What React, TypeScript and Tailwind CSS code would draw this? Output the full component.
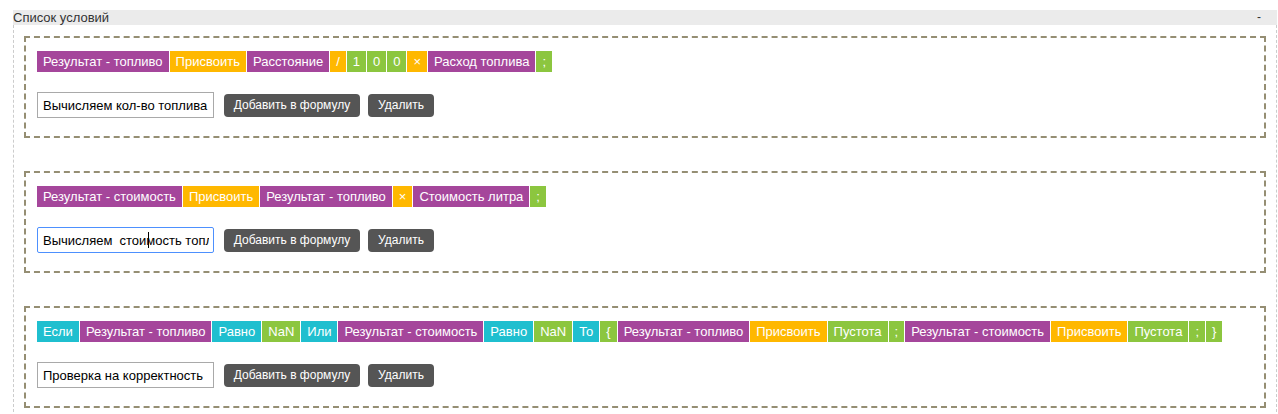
import React from "react";

type Kind = "var" | "op" | "num" | "cond";

interface Token {
  text: string;
  kind: Kind;
}

const kindClass: Record<Kind, string> = {
  var: "bg-[#a5469b]",
  op: "bg-[#ffb800]",
  num: "bg-[#8cc63f]",
  cond: "bg-[#1fbfcf]",
};

interface Formula {
  id: number;
  title: string;
  focused?: boolean;
  tokens: Token[];
}

const formulas: Formula[] = [
  {
    id: 1,
    title: "Вычисляем кол-во топлива",
    tokens: [
      { text: "Результат - топливо", kind: "var" },
      { text: "Присвоить", kind: "op" },
      { text: "Расстояние", kind: "var" },
      { text: "/", kind: "op" },
      { text: "1", kind: "num" },
      { text: "0", kind: "num" },
      { text: "0", kind: "num" },
      { text: "×", kind: "op" },
      { text: "Расход топлива", kind: "var" },
      { text: ";", kind: "num" },
    ],
  },
  {
    id: 2,
    title: "Вычисляем  стоимость топлива",
    focused: true,
    tokens: [
      { text: "Результат - стоимость", kind: "var" },
      { text: "Присвоить", kind: "op" },
      { text: "Результат - топливо", kind: "var" },
      { text: "×", kind: "op" },
      { text: "Стоимость литра", kind: "var" },
      { text: ";", kind: "num" },
    ],
  },
  {
    id: 3,
    title: "Проверка на корректность",
    tokens: [
      { text: "Если", kind: "cond" },
      { text: "Результат - топливо", kind: "var" },
      { text: "Равно", kind: "cond" },
      { text: "NaN", kind: "num" },
      { text: "Или", kind: "cond" },
      { text: "Результат - стоимость", kind: "var" },
      { text: "Равно", kind: "cond" },
      { text: "NaN", kind: "num" },
      { text: "То", kind: "cond" },
      { text: "{", kind: "num" },
      { text: "Результат - топливо", kind: "var" },
      { text: "Присвоить", kind: "op" },
      { text: "Пустота", kind: "num" },
      { text: ";", kind: "num" },
      { text: "Результат - стоимость", kind: "var" },
      { text: "Присвоить", kind: "op" },
      { text: "Пустота", kind: "num" },
      { text: ";", kind: "num" },
      { text: "}", kind: "num" },
    ],
  },
];

function FormulaCard({ formula }: { formula: Formula }) {
  return (
    <div className="border-2 border-dashed border-[#958e73] pl-[11px] pr-[11px] pt-[13px] pb-[18px]">
      {/* tokens */}
      <div className="flex flex-wrap gap-[1px]">
        {formula.tokens.map((t, i) => (
          <span
            key={i}
            className={`h-[21px] leading-[21px] px-[6px] text-[13px] text-white whitespace-nowrap ${kindClass[t.kind]}`}
          >
            {t.text}
          </span>
        ))}
      </div>

      {/* title + actions */}
      <div className="flex items-center mt-[20px]">
        <div className="relative">
          <input
            type="text"
            defaultValue={formula.title}
            className={
              formula.focused
                ? "block w-[177px] h-[26px] pl-[5px] pr-[4px] text-[13px] text-black bg-white border border-[#4d90fe] rounded-[2px] outline-none"
                : "block w-[177px] h-[26px] pl-[5px] pr-[4px] text-[13px] text-black bg-white border border-[#a9a9a9] outline-none"
            }
          />
          {formula.focused && (
            <span className="absolute left-[111px] top-[5px] w-[1px] h-[16px] bg-black" />
          )}
        </div>
        <button className="ml-[10px] w-[136px] h-[23px] rounded-[4px] bg-[#555555] text-white text-[12px]">
          Добавить в формулу
        </button>
        <button className="ml-[8px] w-[66px] h-[23px] rounded-[4px] bg-[#555555] text-white text-[12px]">
          Удалить
        </button>
      </div>
    </div>
  );
}

export default function App() {
  return (
    <div
      className="min-h-screen bg-white pt-[10px] pl-[13px] pr-[1px]"
      style={{ fontFamily: '"Liberation Sans", Arial, sans-serif' }}
    >
      <div className="flex items-center justify-between h-[15px] bg-[#ebebeb] text-[13px] text-[#333333] leading-[15px]">
        <span>Список условий</span>
        <span className="pr-[16px] text-[12px]">-</span>
      </div>

      <div className="border-l border-r border-dashed border-[#cccccc] px-[10px] pt-[11px] pb-[9px] flex flex-col gap-[33px]">
        {formulas.map((f) => (
          <FormulaCard key={f.id} formula={f} />
        ))}
      </div>
    </div>
  );
}
